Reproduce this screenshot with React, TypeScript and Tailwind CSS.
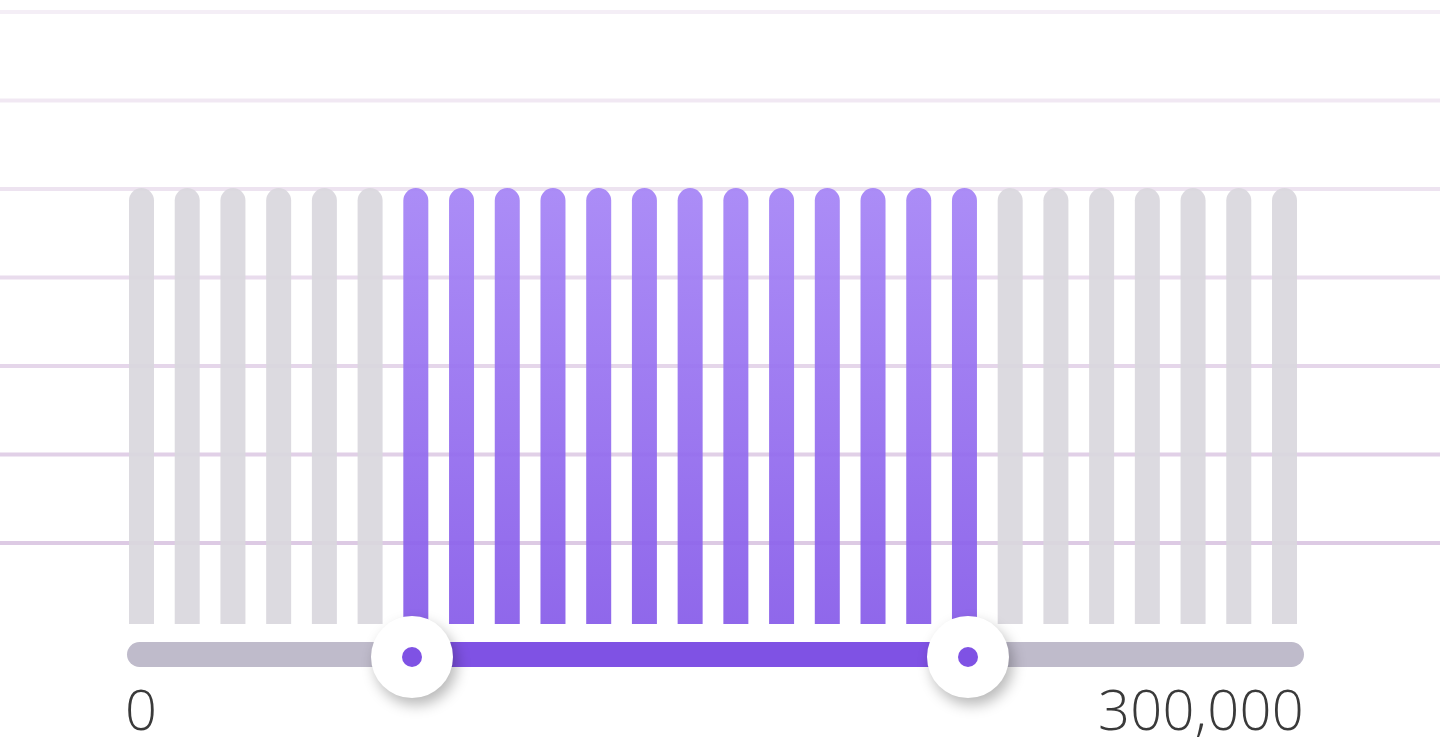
import React from "react";

const BAR_COUNT = 26;
const PITCH = 45.72;
const BAR_X0 = 129;
const BAR_W = 25;
const BAR_TOP = 188;
const BAR_BOTTOM = 624;
const LINE_TOPS = [10, 98.5, 187, 275.5, 364, 452.5, 541];

function Chart() {
  return (
    <svg width="1440" height="624" viewBox="0 0 1440 624" className="block">
      <defs>
        <linearGradient id="pg" x1="0" y1="0" x2="0" y2="1">
          <stop offset="0%" stopColor="#a584f6" />
          <stop offset="100%" stopColor="#875ce9" />
        </linearGradient>
      </defs>
      {LINE_TOPS.map((y, i) => (
        <rect
          key={i}
          x="0"
          y={y}
          width="1440"
          height="4"
          fill="rgb(150,90,170)"
          fillOpacity={0.1 + (i * 0.22) / 6}
        />
      ))}
      {Array.from({ length: BAR_COUNT }).map((_, i) => {
        const x = BAR_X0 + i * PITCH;
        const active = i >= 6 && i <= 18;
        const r = BAR_W / 2;
        const d = `M ${x} ${BAR_BOTTOM} V ${BAR_TOP + r} A ${r} ${r} 0 0 1 ${x + BAR_W} ${BAR_TOP + r} V ${BAR_BOTTOM} Z`;
        return (
          <path
            key={i}
            d={d}
            fill={active ? "url(#pg)" : "#d9d7de"}
            fillOpacity={0.93}
          />
        );
      })}
    </svg>
  );
}

function Handle({ left }: { left: string }) {
  return (
    <div
      className={`absolute top-[-26px] ${left} w-[82px] h-[82px] rounded-full bg-white shadow-[4px_7px_14px_rgba(0,0,0,0.28)] flex items-center justify-center`}
    >
      <div className="w-[20px] h-[20px] rounded-full bg-[#7f52e4]" />
    </div>
  );
}

export default function App() {
  return (
    <div
      className="w-[1440px] h-[754px] bg-white overflow-hidden"
      style={{ fontFamily: '"Open Sans", sans-serif' }}
    >
      <Chart />
      <div className="ml-[127px] w-[1177px] mt-[18px]">
        <div className="relative h-[25px] flex rounded-full overflow-visible">
          <div className="w-[285px] h-full bg-[#bfbbcb] rounded-l-full" />
          <div className="w-[556px] h-full bg-[#7f52e4]" />
          <div className="flex-1 h-full bg-[#bfbbcb] rounded-r-full" />
          <Handle left="left-[244px]" />
          <Handle left="left-[800px]" />
        </div>
        <div className="flex justify-between mt-[13px] text-[56px] leading-none font-light text-[#3a3a3a] tracking-[0.3px]">
          <span className="-ml-[2px]">0</span>
          <span>300,000</span>
        </div>
      </div>
    </div>
  );
}
